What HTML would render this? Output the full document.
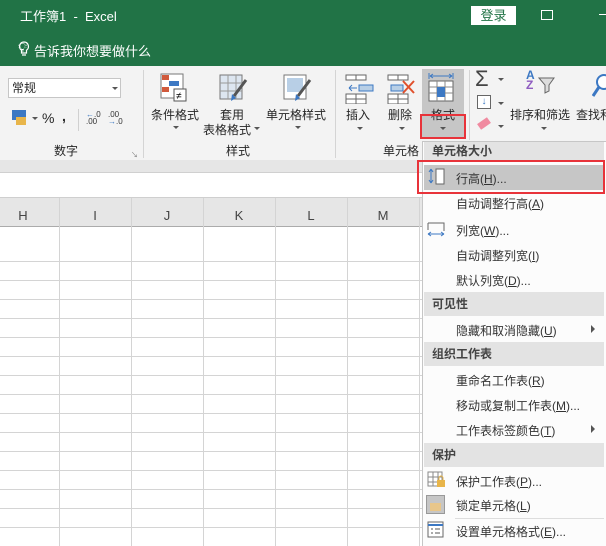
<!DOCTYPE html>
<html><head><meta charset="utf-8"><style>
*{margin:0;padding:0;box-sizing:border-box}
body{width:606px;height:546px;overflow:hidden;position:relative;background:#fff;font-family:"Liberation Sans","Noto Sans CJK SC",sans-serif;font-size:12px;color:#262626}
.a{position:absolute;white-space:nowrap}
.t{color:#fff}
.hd{position:absolute;left:424px;width:180px;background:#e3e3e3;color:#444;font-weight:bold;padding-left:8px;line-height:24px;font-size:12px}
.mi{position:absolute;left:456px;color:#333;font-size:12px}
.vl{position:absolute;top:198px;width:1px;height:348px;background:#d4d4d4}
.hl{position:absolute;left:0;width:424px;height:1px;background:#d4d4d4}
.ch{position:absolute;top:208px;color:#444;font-size:13px;width:20px;text-align:center}
.dd{position:absolute;width:0;height:0;border-left:3px solid transparent;border-right:3px solid transparent;border-top:3px solid #555}
</style></head><body>
<!-- title -->
<div class="a" style="left:0;top:0;width:606px;height:66px;background:#217346"></div>
<div class="a t" style="left:20px;top:6px;font-size:13px">工作簿1 &nbsp;- &nbsp;Excel</div>
<div class="a" style="left:471px;top:6px;width:45px;height:19px;background:#fff;color:#217346;text-align:center;font-size:13px;line-height:19px">登录</div>
<div class="a" style="left:541px;top:10px;width:12px;height:10px;border:1px solid #fff"></div>
<div class="a" style="left:599px;top:14px;width:7px;height:1px;background:#fff"></div>
<div class="a t" style="left:18px;top:40px;font-size:13px">💡︎</div>
<svg class="a" style="left:18px;top:41px" width="12" height="16"><path d="M6 1a4.5 4.5 0 0 0-2.5 8.2V12h5V9.2A4.5 4.5 0 0 0 6 1zM4 14h4" stroke="#fff" fill="none" stroke-width="1.2"/></svg>
<div class="a t" style="left:34px;top:41px;font-size:13px">告诉我你想要做什么</div>
<!-- ribbon -->
<div class="a" style="left:0;top:66px;width:606px;height:94px;background:#f3f3f3"></div>
<div class="a" style="left:8px;top:78px;width:113px;height:20px;background:#fff;border:1px solid #c6c6c6;padding-left:3px;line-height:18px">常规</div>
<div class="dd" style="left:112px;top:87px"></div>
<div class="a" style="left:12px;top:110px;width:14px;height:10px;background:#3c78c3"></div>
<div class="a" style="left:16px;top:117px;width:10px;height:8px;background:#e8b54a"></div>
<div class="dd" style="left:32px;top:117px"></div>
<div class="a" style="left:42px;top:110px;font-size:14px">%</div>
<div class="a" style="left:62px;top:108px;font-size:14px;font-weight:bold">,</div>
<div class="a" style="left:78px;top:109px;width:1px;height:22px;background:#d0d0d0"></div>
<div class="a" style="left:86px;top:111px;font-size:8px;line-height:7px;color:#333"><span style="color:#3c78c3">←</span>.0<br>.00</div>
<div class="a" style="left:108px;top:111px;font-size:8px;line-height:7px;color:#333">.00<br><span style="color:#3c78c3">→</span>.0</div>
<div class="a" style="left:54px;top:142px">数字</div>
<div class="a" style="left:131px;top:150px;font-size:7px;color:#777">↘</div>
<div class="a" style="left:143px;top:70px;width:1px;height:88px;background:#d4d4d4"></div>
<!-- styles icons -->
<svg class="a" style="left:160px;top:73px" width="32" height="30"><rect x="1" y="1" width="22" height="24" fill="#fff" stroke="#777"/><rect x="2" y="2" width="7" height="5" fill="#d05a3c"/><rect x="9" y="8" width="10" height="5" fill="#3c78c3"/><rect x="2" y="14" width="7" height="5" fill="#d05a3c"/><rect x="14" y="16" width="12" height="12" fill="#fff" stroke="#555"/><text x="16" y="26" font-size="10">≠</text></svg>
<div class="a" style="left:151px;top:106px">条件格式</div><div class="dd" style="left:173px;top:126px"></div>
<svg class="a" style="left:219px;top:74px" width="30" height="30"><rect x="1" y="1" width="22" height="24" fill="#dde6f0" stroke="#777"/><path d="M1 9h22M1 17h22M9 1v24M17 1v24" stroke="#999"/><path d="M27 6 15 22" stroke="#555" stroke-width="3"/><path d="M13 20l4 4-5 3z" fill="#3c78c3"/></svg>
<div class="a" style="left:220px;top:106px">套用</div>
<div class="a" style="left:203px;top:121px">表格格式</div><div class="dd" style="left:254px;top:127px"></div>
<svg class="a" style="left:283px;top:74px" width="30" height="30"><rect x="1" y="1" width="22" height="24" fill="#fff" stroke="#777"/><rect x="4" y="4" width="16" height="14" fill="#b8cfe6"/><path d="M27 6 15 22" stroke="#555" stroke-width="3"/><path d="M13 20l4 4-5 3z" fill="#3c78c3"/></svg>
<div class="a" style="left:266px;top:106px">单元格样式</div><div class="dd" style="left:254px;top:126px;left:255px;display:none"></div><div class="dd" style="left:255px;top:126px;display:none"></div><div class="dd" style="left:255px;top:126px;display:none"></div>
<div class="dd" style="left:255px;top:126px;display:none"></div>
<div class="dd" style="left:255px;top:126px;display:none"></div>
<div class="dd" style="left:254px;top:126px;display:none"></div>
<div class="dd" style="left:254px;top:126px;display:none"></div>
<div class="dd" style="left:254px;top:126px;display:none"></div>
<div class="dd" style="left:295px;top:126px"></div>
<div class="a" style="left:226px;top:142px">样式</div>
<div class="a" style="left:335px;top:70px;width:1px;height:88px;background:#d4d4d4"></div>
<!-- cells -->
<svg class="a" style="left:345px;top:74px" width="30" height="30"><rect x="1" y="1" width="10" height="5" fill="#fff" stroke="#666"/><rect x="11" y="1" width="10" height="5" fill="#fff" stroke="#666"/><rect x="14" y="11" width="14" height="6" fill="#b8cfe6" stroke="#3c78c3"/><path d="M4 14h8M4 14l3-3M4 14l3 3" stroke="#3c78c3"/><rect x="1" y="20" width="10" height="5" fill="#fff" stroke="#666"/><rect x="11" y="20" width="10" height="5" fill="#fff" stroke="#666"/><rect x="1" y="25" width="10" height="5" fill="#fff" stroke="#666"/><rect x="11" y="25" width="10" height="5" fill="#fff" stroke="#666"/></svg>
<div class="a" style="left:346px;top:106px">插入</div><div class="dd" style="left:357px;top:127px"></div>
<svg class="a" style="left:387px;top:74px" width="30" height="30"><rect x="1" y="1" width="10" height="5" fill="#fff" stroke="#666"/><rect x="11" y="1" width="10" height="5" fill="#fff" stroke="#666"/><rect x="4" y="11" width="12" height="6" fill="#b8cfe6" stroke="#3c78c3"/><path d="M16 7l11 12M27 7 16 19" stroke="#e0502c" stroke-width="2"/><rect x="1" y="20" width="10" height="5" fill="#fff" stroke="#666"/><rect x="11" y="20" width="10" height="5" fill="#fff" stroke="#666"/><rect x="1" y="25" width="10" height="5" fill="#fff" stroke="#666"/><rect x="11" y="25" width="10" height="5" fill="#fff" stroke="#666"/></svg>
<div class="a" style="left:388px;top:106px">删除</div><div class="dd" style="left:399px;top:127px"></div>
<div class="a" style="left:422px;top:69px;width:42px;height:69px;background:#c6c6c6"></div>
<svg class="a" style="left:428px;top:72px" width="30" height="34"><path d="M2 4h22M2 4l3-2M2 4l3 2M24 4l-3-2M24 4l-3 2M1 1v6M25 1v6" stroke="#3c78c3"/><rect x="1" y="9" width="24" height="20" fill="#fff" stroke="#666"/><path d="M1 15h24M1 21h24M9 9v20M17 9v20" stroke="#888"/><rect x="9" y="15" width="8" height="10" fill="#3c78c3"/></svg>
<div class="a" style="left:431px;top:106px">格式</div><div class="dd" style="left:440px;top:127px"></div>
<div class="a" style="left:420px;top:114px;width:46px;height:25px;border:2px solid #e8333a"></div>
<div class="a" style="left:383px;top:142px">单元格</div>
<div class="a" style="left:469px;top:70px;width:1px;height:70px;background:#d4d4d4"></div>
<div class="a" style="left:475px;top:66px;font-size:22px;color:#444">Σ</div><div class="dd" style="left:498px;top:78px"></div>
<div class="a" style="left:477px;top:95px;width:14px;height:14px;border:1px solid #666;background:#fff;color:#3c78c3;font-size:10px;text-align:center;line-height:12px">↓</div><div class="dd" style="left:498px;top:102px"></div>
<div class="a" style="left:478px;top:120px;width:12px;height:7px;background:#f08aa0;transform:rotate(-35deg)"></div><div class="dd" style="left:498px;top:125px"></div>
<div class="a" style="left:526px;top:70px;font-size:12px;line-height:10px;font-weight:bold"><span style="color:#3c78c3">A</span><br><span style="color:#8e5bc0">Z</span></div>
<svg class="a" style="left:538px;top:76px" width="18" height="18"><path d="M1 2h15l-5 7v6l-4 2V9z" fill="#ddd" stroke="#666"/></svg>
<div class="a" style="left:510px;top:106px">排序和筛选</div><div class="dd" style="left:541px;top:127px"></div>
<svg class="a" style="left:592px;top:72px" width="14" height="30"><circle cx="12" cy="10" r="7" fill="#fff" stroke="#3c78c3" stroke-width="2"/><path d="M7 15 1 24" stroke="#3c78c3" stroke-width="3"/></svg>
<div class="a" style="left:576px;top:106px">查找和</div>
<!-- formula bar -->
<div class="a" style="left:0;top:160px;width:424px;height:12px;background:#e6e6e6"></div>
<div class="a" style="left:0;top:172px;width:424px;height:26px;background:#fff;border-top:1px solid #d0d0d0;border-bottom:1px solid #cfcfcf"></div>
<div class="a" style="left:0;top:198px;width:424px;height:29px;background:#e6e6e6;border-bottom:1px solid #ababab"></div>
<div class="ch" style="left:13px">H</div><div class="ch" style="left:85px">I</div><div class="ch" style="left:157px">J</div><div class="ch" style="left:229px">K</div><div class="ch" style="left:301px">L</div><div class="ch" style="left:373px">M</div>
<div class="vl" style="left:59px"></div><div class="vl" style="left:131px"></div><div class="vl" style="left:203px"></div><div class="vl" style="left:275px"></div><div class="vl" style="left:347px"></div><div class="vl" style="left:419px"></div>
<div class="hl" style="top:261px"></div><div class="hl" style="top:280px"></div><div class="hl" style="top:299px"></div><div class="hl" style="top:318px"></div><div class="hl" style="top:337px"></div><div class="hl" style="top:356px"></div><div class="hl" style="top:375px"></div><div class="hl" style="top:394px"></div><div class="hl" style="top:413px"></div><div class="hl" style="top:432px"></div><div class="hl" style="top:451px"></div><div class="hl" style="top:470px"></div><div class="hl" style="top:489px"></div><div class="hl" style="top:508px"></div><div class="hl" style="top:527px"></div>
<!-- menu -->
<div class="a" style="left:422px;top:141px;width:184px;height:405px;background:#fcfcfc;border-left:1px solid #c6c6c6;border-top:1px solid #c6c6c6"></div>
<div class="hd" style="top:142px;height:19px;line-height:19px">单元格大小</div>
<div class="a" style="left:424px;top:165px;width:180px;height:25px;background:#c6c6c6"></div>
<div class="a" style="left:417px;top:160px;width:188px;height:34px;border:2px solid #e8333a"></div>
<svg class="a" style="left:427px;top:168px" width="20" height="18"><path d="M4 1v14M4 1 2 4M4 1l2 3M4 15l-2-3M4 15l2-3" stroke="#3c78c3"/><rect x="9" y="1" width="8" height="15" fill="#fff" stroke="#666"/></svg>
<div class="mi" style="top:170px">行高(<u>H</u>)...</div>
<div class="mi" style="top:195px">自动调整行高(<u>A</u>)</div>
<svg class="a" style="left:427px;top:222px" width="20" height="16"><path d="M1 1h16v8" stroke="#666" fill="none"/><path d="M1 12h16M1 12l3-2M1 12l3 2M17 12l-3-2M17 12l-3 2" stroke="#3c78c3" fill="none"/><path d="M1 1v7" stroke="#666"/></svg>
<div class="mi" style="top:222px">列宽(<u>W</u>)...</div>
<div class="mi" style="top:247px">自动调整列宽(<u>I</u>)</div>
<div class="mi" style="top:272px">默认列宽(<u>D</u>)...</div>
<div class="hd" style="top:292px">可见性</div>
<div class="mi" style="top:322px">隐藏和取消隐藏(<u>U</u>)</div>
<div class="a" style="left:591px;top:325px;border-top:4px solid transparent;border-bottom:4px solid transparent;border-left:4px solid #555"></div>
<div class="hd" style="top:342px">组织工作表</div>
<div class="mi" style="top:372px">重命名工作表(<u>R</u>)</div>
<div class="mi" style="top:397px">移动或复制工作表(<u>M</u>)...</div>
<div class="mi" style="top:422px">工作表标签颜色(<u>T</u>)</div>
<div class="a" style="left:591px;top:425px;border-top:4px solid transparent;border-bottom:4px solid transparent;border-left:4px solid #555"></div>
<div class="hd" style="top:443px">保护</div>
<svg class="a" style="left:427px;top:471px" width="20" height="18"><path d="M1 1h14v14H1zM1 6h14M1 11h14M6 1v14M11 1v14" stroke="#888" fill="#fff"/><rect x="10" y="9" width="8" height="7" fill="#e8b54a"/><path d="M12 9V7a2 2 0 0 1 4 0v2" stroke="#e8b54a" fill="none"/></svg>
<div class="mi" style="top:473px">保护工作表(<u>P</u>)...</div>
<div class="a" style="left:426px;top:495px;width:19px;height:19px;background:#c6c6c6;border:1px solid #999"></div>
<div class="a" style="left:430px;top:503px;width:11px;height:8px;background:#e8c68a"></div>
<div class="mi" style="top:497px">锁定单元格(<u>L</u>)</div>
<div class="a" style="left:455px;top:518px;width:149px;height:1px;background:#ddd"></div>
<svg class="a" style="left:427px;top:521px" width="20" height="18"><rect x="1" y="1" width="15" height="15" fill="#fff" stroke="#666"/><path d="M1 4h15" stroke="#3c78c3" stroke-width="2"/><path d="M4 8h2M8 8h5M4 12h2M8 12h5" stroke="#555"/></svg>
<div class="mi" style="top:523px">设置单元格格式(<u>E</u>)...</div>
</body></html>
